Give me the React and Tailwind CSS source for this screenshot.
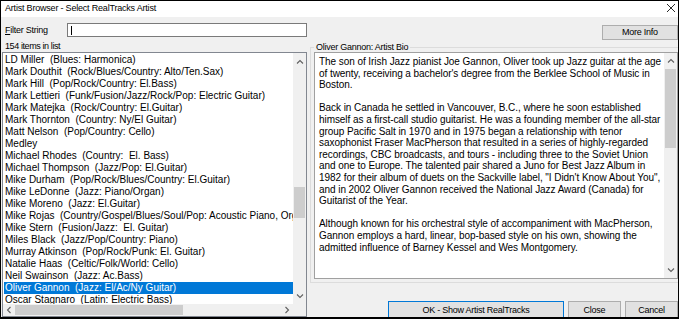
import React from "react";

const rows = [
  "LD Miller  (Blues: Harmonica)",
  "Mark Douthit  (Rock/Blues/Country: Alto/Ten.Sax)",
  "Mark Hill  (Pop/Rock/Country: El.Bass)",
  "Mark Lettieri  (Funk/Fusion/Jazz/Rock/Pop: Electric Guitar)",
  "Mark Matejka  (Rock/Country: El.Guitar)",
  "Mark Thornton  (Country: Ny/El Guitar)",
  "Matt Nelson  (Pop/Country: Cello)",
  "Medley",
  "Michael Rhodes  (Country:  El. Bass)",
  "Michael Thompson  (Jazz/Pop: El.Guitar)",
  "Mike Durham  (Pop/Rock/Blues/Country: El.Guitar)",
  "Mike LeDonne  (Jazz: Piano/Organ)",
  "Mike Moreno  (Jazz: El.Guitar)",
  "Mike Rojas  (Country/Gospel/Blues/Soul/Pop: Acoustic Piano, Organ)",
  "Mike Stern  (Fusion/Jazz:  El. Guitar)",
  "Miles Black  (Jazz/Pop/Country: Piano)",
  "Murray Atkinson  (Pop/Rock/Punk: El. Guitar)",
  "Natalie Haas  (Celtic/Folk/World: Cello)",
  "Neil Swainson  (Jazz: Ac.Bass)",
  "Oliver Gannon  (Jazz: El/Ac/Ny Guitar)",
  "Oscar Stagnaro  (Latin: Electric Bass)",
];

const bio = [
  "The son of Irish Jazz pianist Joe Gannon, Oliver took up Jazz guitar at the age",
  "of twenty, receiving a bachelor's degree from the Berklee School of Music in",
  "Boston.",
  "",
  "Back in Canada he settled in Vancouver, B.C., where he soon established",
  "himself as a first-call studio guitarist. He was a founding member of the all-star",
  "group Pacific Salt in 1970 and in 1975 began a relationship with tenor",
  "saxophonist Fraser MacPherson that resulted in a series of highly-regarded",
  "recordings, CBC broadcasts, and tours - including three to the Soviet Union",
  "and one to Europe. The talented pair shared a Juno for Best Jazz Album in",
  "1982 for their album of duets on the Sackville label, \"I Didn't Know About You\",",
  "and in 2002 Oliver Gannon received the National Jazz Award (Canada) for",
  "Guitarist of the Year.",
  "",
  "Although known for his orchestral style of accompaniment with MacPherson,",
  "Gannon employs a hard, linear, bop-based style on his own, showing the",
  "admitted influence of Barney Kessel and Wes Montgomery.",
];

function Chevron({ dir }) {
  const d = {
    up: "M1 5.5 L4 2.5 L7 5.5",
    down: "M1 2.5 L4 5.5 L7 2.5",
    left: "M5.5 1 L2.5 4 L5.5 7",
    right: "M2.5 1 L5.5 4 L2.5 7",
  }[dir];
  return (
    <svg width="8" height="8" viewBox="0 0 8 8" className="block">
      <path d={d} fill="none" stroke="#606060" strokeWidth="1.1" />
    </svg>
  );
}

export default function App() {
  return (
    <div className="w-[679px] h-[319px] border-l border-t border-r border-b-2 border-black bg-[#f0f0f0] flex flex-col overflow-hidden font-['Liberation_Sans',Arial,sans-serif] text-black">
      {/* title bar */}
      <div className="h-[16px] shrink-0 bg-white flex items-center justify-between pl-[4px] pr-[2px]">
        <span className="text-[9px] tracking-[-0.2px] leading-none pb-[1px]">
          Artist Browser - Select RealTracks Artist
        </span>
        <svg width="10" height="10" viewBox="0 0 10 10" className="block mb-[3px]">
          <path d="M1 1 L9 9 M9 1 L1 9" stroke="#111" strokeWidth="0.9" />
        </svg>
      </div>

      {/* body */}
      <div className="flex-1 flex overflow-hidden">
        {/* left column */}
        <div className="ml-[1px] w-[305px] shrink-0 flex flex-col">
          <div className="mt-[6px] h-[14px] shrink-0 flex items-center">
            <span className="w-[65px] pl-[3px] text-[9px] tracking-[-0.25px] leading-none">
              <span className="underline">F</span>ilter String
            </span>
            <div className="w-[240px] h-[14px] bg-white border border-[#7a7a7a] flex items-center pl-[3px]">
              <div className="w-[1px] h-[9px] bg-black" />
            </div>
          </div>
          <div className="h-[15px] shrink-0 pt-[4px] pl-[3px] text-[9px] tracking-[-0.4px] leading-[10px]">
            154 items in list
          </div>
          <div className="h-[265px] shrink-0 border border-[#828790] bg-white flex flex-col">
            <div className="h-[251px] flex">
              <div className="w-[290px] overflow-hidden pt-[1px] pl-[1px] text-[10px] leading-[12px]">
                {rows.map((r, i) => (
                  <div
                    key={i}
                    className={
                      "h-[12px] px-[1px] whitespace-pre " +
                      (i === 19 ? "bg-[#0078d7] text-white" : "")
                    }
                  >
                    {r}
                  </div>
                ))}
              </div>
              <div className="w-[13px] bg-[#f0f0f0] flex flex-col">
                <div className="h-[17px] flex items-center justify-center">
                  <Chevron dir="up" />
                </div>
                <div className="mt-[117px] h-[31px] mx-[1px] bg-[#cdcdcd]" />
                <div className="flex-1" />
                <div className="h-[17px] flex items-center justify-center">
                  <Chevron dir="down" />
                </div>
              </div>
            </div>
            <div className="h-[12px] flex">
              <div className="w-[290px] bg-[#f0f0f0] flex items-center">
                <div className="w-[12px] flex justify-center">
                  <Chevron dir="left" />
                </div>
                <div className="w-[168px] h-[10px] bg-[#cdcdcd]" />
                <div className="flex-1" />
                <div className="w-[13px] flex justify-center">
                  <Chevron dir="right" />
                </div>
              </div>
              <div className="w-[13px] bg-[#f0f0f0]" />
            </div>
          </div>
        </div>

        {/* right column */}
        <div className="ml-[3px] flex-1 flex flex-col">
          <div className="mt-[8px] h-[15px] shrink-0 flex justify-end">
            <div className="w-[76px] h-[15px] bg-[#e1e1e1] border border-[#adadad] flex items-center justify-center text-[9px] tracking-[-0.25px] leading-none">
              More Info
            </div>
          </div>
          <div className="relative mt-[7px] h-[236px] shrink-0 border-l border-t border-b border-[#dcdcdc] pl-[3px] pt-[4px]">
            <span className="absolute left-[3px] top-[-6px] px-[2px] bg-[#f0f0f0] text-[9px] tracking-[-0.25px] leading-[10px]">
              Oliver Gannon: Artist Bio
            </span>
            <div className="h-[227px] border border-[#a0a0a0] bg-white flex">
              <div className="flex-1 overflow-hidden pl-[4px] pt-[3px] text-[10px] tracking-[-0.06px] leading-[11.6px]">
                {bio.map((l, i) => (
                  <div key={i} className="h-[11.6px] whitespace-pre">
                    {l}
                  </div>
                ))}
              </div>
              <div className="w-[13px] bg-[#f0f0f0] flex flex-col">
                <div className="h-[16px] flex items-center justify-center">
                  <Chevron dir="up" />
                </div>
                <div className="h-[79px] mx-[1px] bg-[#cdcdcd]" />
                <div className="flex-1" />
                <div className="h-[16px] flex items-center justify-center">
                  <Chevron dir="down" />
                </div>
              </div>
            </div>
          </div>
          <div className="mt-[18px] h-[20px] shrink-0 flex justify-end gap-[4px] text-[9px] tracking-[-0.25px] leading-none">
            <div className="w-[176px] h-[20px] bg-[#e1e1e1] border border-[#0078d7] flex justify-center pt-[4px]">
              OK - Show Artist RealTracks
            </div>
            <div className="w-[53px] h-[20px] bg-[#e1e1e1] border border-[#adadad] flex justify-center pt-[4px]">
              Close
            </div>
            <div className="w-[53px] h-[20px] bg-[#e1e1e1] border border-[#adadad] flex justify-center pt-[4px]">
              Cancel
            </div>
          </div>
        </div>
      </div>
    </div>
  );
}
